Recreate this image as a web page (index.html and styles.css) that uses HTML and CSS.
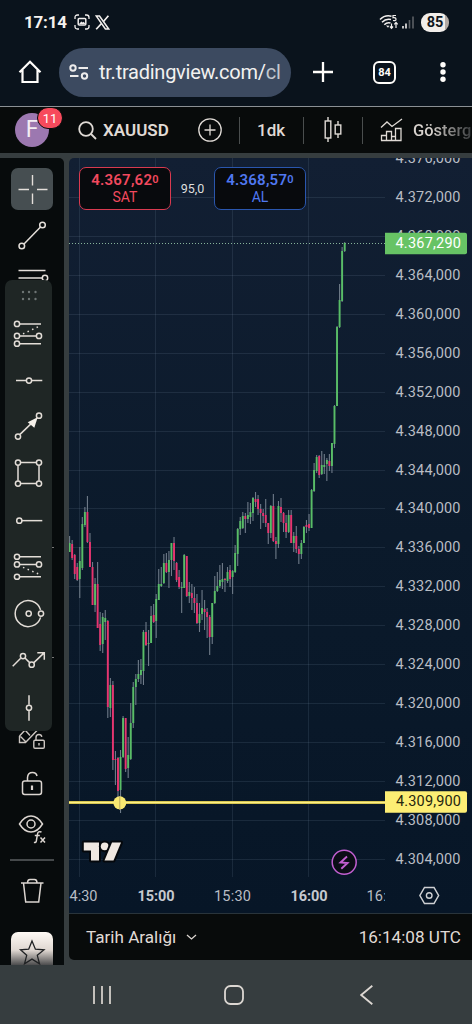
FILE: index.html
```html
<!DOCTYPE html>
<html lang="tr">
<head>
<meta charset="utf-8">
<title>XAUUSD</title>
<link rel="stylesheet" href="styles.css">
</head>
<body>
<div class="screen">
  <header class="status">
    <span class="clock">17:14</span>
    <svg class="st-shot" width="16" height="16" viewBox="0 0 16 16" fill="none" stroke="#f2efed" stroke-width="1.3"><path d="M1 5V3.500Q1 1 3.500 1H5M11 1h1.500Q15 1 15 3.500V5M15 11v1.500Q15 15 12.500 15H11M5 15H3.500Q1 15 1 12.500V11"/><rect x="4.200" y="4.500" width="7.600" height="6.500" rx="1" stroke-width="1.500"/><path d="M5 10l2.300-2.600 1.500 1.200 1-.8 1.600 2.200z" fill="#f2efed" stroke="none"/></svg>
    <svg class="st-x" width="15" height="15" viewBox="0 0 15 15" fill="none" stroke="#f2efed"><path d="M1.200 1h3.300l9.200 13h-3.300z" stroke-width="1.500"/><path d="M13.400 .8L8.300 6.700M6.500 8.500L1.200 14.300" stroke-width="1.700"/></svg>
    <span class="grow"></span>
    <svg class="st-wifi" width="20" height="16" viewBox="0 0 20 16" fill="none" stroke="#f2efed" stroke-width="1.600"><path d="M1 5.500Q6 .5 12.500 2.200M3 8.200Q7 4.300 12 5.600M5.300 10.700Q8 8 11.500 9"/><path d="M7 11.500l2 2.300 1.400-2z" fill="#f2efed" stroke="none"/><path d="M17 1.500h-3v2.200q3-.4 3 1.500t-3 1.300M12.500 9.500v4.500M11 12.500l1.500 1.800 1.500-1.800M17 14V8.500M15.300 10.300L17 8.400l1.700 1.900" stroke-width="1.200"/></svg>
    <svg class="st-sig" width="13" height="13" viewBox="0 0 13 13"><path d="M1 10v2.500M4 7.500v5" stroke="#f2efed" stroke-width="1.600"/><path d="M7.500 4v8.500M11 .5v12" stroke="#5c6065" stroke-width="1.600"/></svg>
    <span class="battery">85</span>
  </header>

  <div class="browser">
    <svg class="home" width="24" height="24" viewBox="0 0 24 24" fill="none" stroke="#fffdfa" stroke-width="2.200"><path d="M1.500 12.300L12 1.800l10.500 10.500M4.500 10v12h15V10"/></svg>
    <div class="url">
      <svg width="20" height="16" viewBox="0 0 20 16" fill="none" stroke="#ecebeb" stroke-width="2"><circle cx="4" cy="4" r="2.700"/><path d="M9.500 4H19M1 12h8.500"/><circle cx="15.500" cy="12" r="2.700"/></svg>
      <span class="address">tr.tradingview.com/<i>cl</i></span>
    </div>
    <svg class="plus" width="20" height="20" viewBox="0 0 20 20" stroke="#fffdfa" stroke-width="2.300"><path d="M10 0v20M0 10h20"/></svg>
    <span class="tabs">84</span>
    <svg class="dots" width="6" height="20" viewBox="0 0 6 20" fill="#fffdfa"><circle cx="3" cy="2.700" r="2.700"/><circle cx="3" cy="10" r="2.700"/><circle cx="3" cy="17.300" r="2.700"/></svg>
  </div>

  <div class="topbar">
    <div class="avatar">F<span class="badge">11</span></div>
    <svg class="search" width="19" height="19" viewBox="0 0 19 19" fill="none" stroke="#dfdad5" stroke-width="1.800"><circle cx="8" cy="8" r="6.800"/><path d="M13 13l5 5"/></svg>
    <span class="symbol">XAUUSD</span>
    <svg class="add" width="24" height="24" viewBox="0 0 24 24" fill="none" stroke="#dfdad5" stroke-width="1.300"><circle cx="12" cy="12" r="11.200"/><path d="M12 6.500v11M6.500 12h11"/></svg>
    <i class="sep"></i>
    <span class="interval">1dk</span>
    <i class="sep"></i>
    <svg class="bars" width="18" height="26" viewBox="0 0 18 26" fill="none" stroke="#dfdad5" stroke-width="1.400"><path d="M4 0v4M4 21v4M14 4v4M14 17v4"/><rect x="1.200" y="4" width="5.600" height="17"/><rect x="11.200" y="8" width="5.600" height="9"/></svg>
    <i class="sep"></i>
    <svg class="indic" width="23" height="24" viewBox="0 0 23 24" fill="none" stroke="#dfdad5" stroke-width="1.300"><path d="M1 9.500l6-5.500 5 4.500L22 1M1.500 22.500v-5h5v5M6.500 18v-4.500h5v9M11.500 18.500h4M15.500 22.500V10.500h5.500v12zM1 22.500h20"/></svg>
    <span class="indicators">Gösterg</span>
  </div>

  <main class="workspace">
    <aside class="sidebar">
      <div class="tool active"><svg width="42" height="42" viewBox="0 0 42 42" stroke="#e4dfda" stroke-width="1.400"><path d="M21.500 7v10.500M21.500 25.500V36M7.500 21.500H18M26 21.500h10.500"/></svg></div>
      <div class="tool line"><svg width="42" height="52" viewBox="0 0 42 52" fill="none" stroke="#e4dfda" stroke-width="1.500"><path d="M13 34l16.500-17"/><circle cx="10.800" cy="36" r="2.800"/><circle cx="31.500" cy="15" r="2.800"/></svg></div>
      <div class="tool levels"><svg width="42" height="46" viewBox="0 0 42 46" fill="none" stroke="#e4dfda" stroke-width="1.500"><path d="M7.500 8.500h27M7.500 16h24M7.500 24h27"/><circle cx="34" cy="16" r="2.700"/></svg></div>
      <span class="grow"></span>
      <div class="tool"><svg width="42" height="46" viewBox="0 0 42 46" fill="none" stroke="#ccc6c1" stroke-width="1.400"><path d="M8.500 19v6.500h6L26 13.500M8.500 19l7-7.500M9.500 19.500l5 5M14.500 13.500l4.500 5"/><rect x="22.800" y="23.300" width="10.500" height="8" rx="1.200"/><path d="M25 23v-2.500q0-3 3-3 2.500 0 2.800 2.300M28 26v2.500"/></svg></div>
      <div class="tool"><svg width="42" height="43" viewBox="0 0 42 43" fill="none" stroke="#dcd6d1" stroke-width="1.500"><rect x="11.500" y="18" width="19" height="13.500" rx="2.200"/><path d="M16.500 18v-3.500q.3-5 5-5 3.800 0 4.500 3.500"/><path d="M21 22.500v4.500" stroke-width="2.200"/></svg></div>
      <div class="tool"><svg width="42" height="46" viewBox="0 0 42 46" fill="none" stroke="#dcd6d1" stroke-width="1.500"><path d="M8.500 18Q13.500 10 20 10t11.500 8Q26.500 26 20 26T8.500 18z"/><circle cx="20" cy="18" r="4"/><path d="M30.500 26q-3.500-1.200-4 2l-1.200 7q-.4 2-2.300 1.200M23.800 29.500h5M29.500 31.500l4.500 5M34 31.500l-4.500 5"/></svg></div>
      <hr class="rule">
      <div class="tool"><svg width="42" height="46" viewBox="0 0 42 46" fill="none" stroke="#dcd6d1" stroke-width="1.500"><path d="M10 15h22.500M12.500 15l2.200 19h13l2.300-19M16.500 15q0-3.500 2.500-3.500h4.500q2.500 0 2.500 3.500"/></svg></div>
      <div class="tool star"><svg width="42" height="33" viewBox="0 0 42 33" fill="none" stroke="#202224" stroke-width="1.300"><path d="M21 9l3.400 8.200 8.600.6-6.700 5.500 2.200 8.500-7.500-4.700-7.500 4.700 2.200-8.500L9.500 17.800l8.200-.6z"/></svg></div>

      <div class="favorites">
        <svg class="grip" width="16" height="11" viewBox="0 0 16 11" fill="#6e7574"><circle cx="2" cy="2" r="1.200"/><circle cx="8" cy="2" r="1.200"/><circle cx="14.500" cy="2" r="1.200"/><circle cx="2" cy="9" r="1.200"/><circle cx="8" cy="9" r="1.200"/><circle cx="14.500" cy="9" r="1.200"/></svg>
        <svg class="fav" viewBox="0 0 47 46"><path d="M14.800 13.600H36M14.800 25.600H31M14.800 33.300H36"/><path class="dotted" d="M18 23.500L34 16"/><circle cx="12" cy="13.600" r="2.600"/><circle cx="12" cy="25.600" r="2.600"/><circle cx="34" cy="25.600" r="2.600"/><circle cx="12" cy="33.300" r="2.600"/></svg>
        <svg class="fav" viewBox="0 0 47 46"><path d="M11 23.200h10.200M26.800 23.200h10.500"/><circle cx="24" cy="23.200" r="2.600"/></svg>
        <svg class="fav" viewBox="0 0 47 46"><path d="M15 31l13-12.500"/><path class="solid" d="M32.700 13.900l-10 5 6.600 5.600z"/><circle cx="13" cy="33.200" r="2.600"/><circle cx="34" cy="12.300" r="2.600"/></svg>
        <svg class="fav" viewBox="0 0 47 46"><path d="M15.700 12.200h15.600M15.700 33.200h15.600M13 15v15.500M34 15v15.500"/><circle cx="13" cy="12.200" r="2.600"/><circle cx="34" cy="12.200" r="2.600"/><circle cx="13" cy="33.200" r="2.600"/><circle cx="34" cy="33.200" r="2.600"/></svg>
        <svg class="fav" viewBox="0 0 47 46"><path d="M17 23.300h20.300"/><circle cx="14.300" cy="23.300" r="2.600"/></svg>
        <svg class="fav" viewBox="0 0 47 46"><path d="M14.800 13.400H36M14.800 21.100H31M14.800 33.400H36"/><path class="dotted" d="M18 24L34.500 31"/><circle cx="12" cy="13.400" r="2.600"/><circle cx="12" cy="21.100" r="2.600"/><circle cx="34" cy="21.100" r="2.600"/><circle cx="12" cy="33.400" r="2.600"/></svg>
        <svg class="fav" viewBox="0 0 47 46"><path d="M35.600 19.500A13 13 0 1 0 35.600 27"/><circle cx="23.700" cy="23.200" r="2.600"/><circle cx="36" cy="23.200" r="2.600"/></svg>
        <svg class="fav" viewBox="0 0 47 46"><path d="M7.700 29l8-8M20 20.700l4.600 4.600M28.600 25.500l10.500-10M32.300 15.400h7v7"/><circle cx="18" cy="18.700" r="2.600"/><circle cx="26.700" cy="27.300" r="2.600"/></svg>
        <svg class="fav" viewBox="0 0 47 46"><path d="M24 11v9.500M24 26v10.500"/><circle cx="24" cy="23.400" r="2.600"/></svg>
      </div>
    </aside>

    <section class="panel">
      <div class="chart">
        <svg class="plot" width="403" height="755" viewBox="69 158 403 755">
          <defs><clipPath id="axis"><rect x="69" y="880" width="316" height="30"/></clipPath></defs>
          <path class="grid" d="M79.500 158V877M155.500 158V877M232.500 158V877M308.500 158V877M69 197.500H385M69 236.500H385M69 275.500H385M69 314.500H385M69 353.500H385M69 392.500H385M69 431.500H385M69 470.500H385M69 508.500H385M69 547.500H385M69 586.500H385M69 625.500H385M69 664.500H385M69 703.500H385M69 742.500H385M69 781.500H385M69 820.500H385M69 859.500H385"/>
          <path class="last" d="M69 243.500H385"/>
          <path class="support-edge" d="M69 802.500H385"/>
          <path class="support" d="M69 802.500H385"/>
          <g id="candles"></g>
          <circle cx="119.800" cy="802.800" r="6.500" fill="#f9e972"/>
          <path d="M119.800 796v14" stroke="#b9a860" stroke-width="1"/>
          <g id="prices" class="prices"></g>
          <path d="M385 232.800h80a2 2 0 0 1 2 2v17.500a2 2 0 0 1-2 2h-80z" fill="#67c365"/>
          <text class="tag tag-last" x="395.500" y="247.700" textLength="65.500">4.367,290</text>
          <path d="M385 791.300h80a2 2 0 0 1 2 2v17.500a2 2 0 0 1-2 2h-80z" fill="#fdee74"/>
          <text class="tag tag-line" x="396" y="806" textLength="65">4.309,900</text>
          <g class="logo"><path d="M83.800 842.500H99v18h-8v-10h-7.200z"/><circle cx="104.700" cy="846.300" r="3.900"/><path d="M112 842.500h9l-7.500 18h-9z"/></g>
          <circle cx="344.200" cy="862.300" r="12" fill="#0b0d16" stroke="#c25fd0" stroke-width="1.500"/>
          <path d="M347 856.500l-6.500 6 7 .5-6.200 5.800" fill="none" stroke="#c25fd0" stroke-width="1.900"/>
          <g class="times" clip-path="url(#axis)">
            <text x="69.500" y="901" textLength="28">4:30</text>
            <text class="hour" x="137.500" y="901" textLength="37">15:00</text>
            <text x="214" y="901" textLength="37">15:30</text>
            <text class="hour" x="290.500" y="901" textLength="37">16:00</text>
            <text x="366.500" y="901" textLength="37">16:30</text>
          </g>
          <path d="M424.500 887.500h9.500l4.600 8-4.600 8h-9.500l-4.600-8z" fill="none" stroke="#ced0d3" stroke-width="1.500"/>
          <circle cx="429.200" cy="895.500" r="2.800" fill="none" stroke="#ced0d3" stroke-width="1.400"/>
        </svg>
        <div class="quotes">
          <div class="quote sell"><b>4.367,62<sup>0</sup></b><span>SAT</span></div>
          <span class="spread">95,0</span>
          <div class="quote buy"><b>4.368,57<sup>0</sup></b><span>AL</span></div>
        </div>
      </div>
      <footer class="range">
        <span class="range-label">Tarih Aralığı</span>
        <svg width="11" height="7" viewBox="0 0 11 7" fill="none" stroke="#dcd6d1" stroke-width="1.300"><path d="M1 1l4.500 4L10 1"/></svg>
        <span class="grow"></span>
        <span class="utc">16:14:08 UTC</span>
      </footer>
    </section>
  </main>

  <nav class="navbar">
    <svg width="20" height="20" viewBox="0 0 20 20" stroke="#dcd7d2" stroke-width="1.700"><path d="M2 1v18M10 1v18M18 1v18"/></svg>
    <svg class="nav-home" width="20" height="20" viewBox="0 0 20 20" fill="none" stroke="#dcd7d2" stroke-width="1.800"><rect x="1" y="1" width="18" height="18" rx="5.500"/></svg>
    <svg width="13" height="20" viewBox="0 0 13 20" fill="none" stroke="#dcd7d2" stroke-width="1.800"><path d="M12.300 .7L1.200 10l11.100 9.300"/></svg>
  </nav>
</div>
<script src="chart.js"></script>
</body>
</html>
```

FILE: styles.css
```css
* { box-sizing: border-box; }
body { margin: 0; background: #363d3f; font-family: Roboto, "Liberation Sans", sans-serif; }
svg { display: block; flex: none; }
.screen { width: 472px; height: 1024px; display: flex; flex-direction: column; overflow: hidden; background: #363d3f; }
.grow { flex: 1; }

.status { height: 44px; display: flex; align-items: center; padding-left: 24px; padding-right: 23px; background: #0a131c; color: #f5f2ef; }
.clock { width: 43px; font-size: 17px; font-weight: 700; letter-spacing: -0.2px; white-space: nowrap; }
.st-shot { margin-left: 7px; }
.st-x { margin-left: 5px; }
.st-wifi { margin-right: 3px; }
.st-sig { margin-right: 6px; }
.battery { width: 28px; height: 19px; line-height: 19px; border-radius: 9px; text-align: center; font-size: 14.500px; font-weight: 700; color: #11161b; background: linear-gradient(90deg, #f2eeea 86%, #b3aaa4 86%); }

.browser { height: 62px; display: flex; align-items: center; padding: 0 26px 6px 18px; background: #0a131c; }
.url { width: 232px; height: 49px; margin-left: 17px; padding-left: 10px; display: flex; align-items: center; border-radius: 25px; background: #3c4a60; overflow: hidden; }
.address { margin-left: 10px; font-size: 20px; letter-spacing: -0.250px; color: #f2f1f0; white-space: nowrap; }
.address i { font-style: normal; color: #c3c8cf; }
.plus { margin-left: 22px; }
.tabs { width: 23px; height: 23px; margin-left: 40px; line-height: 19px; border: 2px solid #fffdfa; border-radius: 6px; text-align: center; font-size: 11px; font-weight: 700; color: #fffdfa; }
.dots { margin-left: auto; }

.topbar { height: 47px; flex: none; display: flex; align-items: center; padding-left: 15px; border-top: 1px solid #8b9094; background: #080b0b; color: #e0dbd6; overflow: hidden; }
.avatar { position: relative; width: 34px; height: 34px; line-height: 34px; border-radius: 50%; text-align: center; font-size: 23px; color: #f3edf3; background: #9c78b0; }
.badge { position: absolute; left: 22px; top: -6px; width: 26px; height: 22px; line-height: 21px; border: 1px solid #080b0b; border-radius: 11px; font-size: 13px; color: #fff; background: #f74a5c; }
.search { margin-left: 29px; }
.symbol { width: 67px; margin-left: 6px; margin-right: 1px; font-size: 17px; font-weight: 600; letter-spacing: 0; white-space: nowrap; }
.add { margin-left: 27px; }
.sep { width: 1px; height: 27px; background: #4a4e4e; }
.add + .sep { margin-left: 17px; }
.interval { width: 29px; margin-left: 17px; margin-right: 17px; font-size: 17px; font-weight: 500; white-space: nowrap; }
.bars { margin-left: 20px; margin-right: 20px; }
.indic { margin-left: 17px; }
.indicators { margin-left: 10px; font-size: 16.500px; font-weight: 500; white-space: nowrap; background: linear-gradient(90deg, #d8d3ce 30%, #3b3e40 100%); background-clip: text; -webkit-background-clip: text; color: transparent; }

.workspace { flex: none; height: 807px; margin-top: 5px; display: flex; gap: 5px; }
.sidebar { position: relative; width: 64px; height: 807px; padding-top: 10px; display: flex; flex-direction: column; align-items: center; border-radius: 0 5px 0 0; background: #070b0c; }
.tool { width: 42px; flex: none; overflow: hidden; }
.active { border-radius: 7px; background: #464e51; }
.rule { width: 44px; height: 2px; margin: 7px 0 7px; border: 0; background: #45494b; }
.star { height: 33px; margin-top: 18px; border-radius: 7px 7px 0 0; background: linear-gradient(#fffaf5, #dfd7d1 55%, #4c4c4d); }
.favorites { position: absolute; left: 5px; top: 122px; width: 47px; height: 451px; padding-top: 10px; display: flex; flex-direction: column; align-items: center; border-radius: 7px; background: #1f2625; }
.favorites::before, .favorites::after { content: ""; position: absolute; left: 47px; top: 267px; width: 2px; height: 1px; background: #777; }
.favorites::after { top: 377px; }
.grip { margin-bottom: 9px; }
.fav { width: 47px; height: 46.700px; fill: none; stroke: #e3ddd7; stroke-width: 1.500; }
.fav .dotted { stroke-dasharray: 1.500 3.500; }
.fav .solid { fill: #f5f0ea; stroke: none; }

.panel { width: 403px; }
.chart { position: relative; height: 755px; border-radius: 5px 0 0 0; overflow: hidden; background: linear-gradient(#121f33, #0b1a2b 50%, #071627); }
.quotes { position: absolute; left: 10px; top: 9px; display: flex; align-items: center; }
.quote { width: 92px; height: 43px; padding-top: 4px; display: flex; flex-direction: column; align-items: center; border: 1px solid; border-radius: 7px; line-height: 17px; background: #080a0d; }
.quote b { font-size: 15px; font-weight: 600; letter-spacing: 0.200px; }
.quote sup { font-size: 11px; line-height: 0; vertical-align: 2px; }
.quote span { font-size: 14px; }
.sell { border-color: #d93a50; color: #f2495e; }
.buy { border-color: #2a56ad; color: #5078f0; }
.spread { width: 43px; text-align: center; font-size: 12.500px; color: #dedede; }

.grid { stroke: #9fb6d0; stroke-opacity: 0.120; fill: none; }
.last { stroke: #86b39a; stroke-dasharray: 1 2; }
.support { stroke: #fdef86; stroke-width: 1.600; }
.support-edge { stroke: #c8b93f; stroke-width: 3; }
.wick { stroke: #6f7b89; stroke-width: 1.100; }
.up { fill: #58bd66; }
.down { fill: #e8336f; }
.prices text, .tag, .times text { font-size: 14.500px; fill: #b9bdc4; }
.prices text.tag-last, .tag-last { fill: #fff; }
.tag-line { fill: #25260f; }
text.tag-last { fill: #fff; }
text.tag-line { fill: #25260f; }
.times .hour { font-weight: 700; fill: #c5c9cf; }
.logo { fill: #f0e8e1; stroke: #05080c; stroke-width: 4; paint-order: stroke; stroke-linejoin: round; }

.range { height: 47px; padding-left: 17px; padding-right: 11px; display: flex; align-items: center; border-top: 1px solid #29343b; border-radius: 0 0 0 5px; background: #080b0b; color: #e0dbd6; font-size: 17.100px; white-space: nowrap; }
.range svg { margin-left: 10px; }

.navbar { flex: none; height: 59px; display: flex; align-items: center; padding-left: 92px; padding-right: 99px; justify-content: space-between; }
.nav-home { margin-right: 4px; }
```

FILE: chart.js
```javascript
// One row per minute: high, low, body top, body bottom, direction (1 up, 0 down)
const rows = [
  [536,552,543,552,1],[540,560,544,558,0],[554,579,555,574,0],[563,581,567,580,0],[547,598,561,579,1],
  [517,570,524,568,1],[507,527,512,525,1],[496,543,512,542,0],[533,567,542,567,0],[562,605,567,605,0],
  [578,612,584,605,1],[562,628,584,628,0],[612,651,624,645,0],[613,653,617,644,1],[610,640,618,622,1],
  [620,718,621,707,0],[678,717,685,708,1],[681,770,685,760,0],[751,785,759,760,0],[757,803,758,791,0],
  [750,813,757,790,1],[716,758,718,757,1],[718,772,718,769,0],[737,778,755,768,1],[703,760,723,759,1],
  [682,728,687,723,1],[674,705,679,687,1],[660,682,674,679,1],[659,684,670,675,1],[630,685,632,671,1],
  [622,646,632,645,0],[630,666,643,644,1],[606,643,616,643,1],[604,623,615,622,0],[594,638,599,621,1],
  [569,600,584,600,1],[567,587,584,586,1],[554,584,563,583,1],[553,573,563,572,0],[551,588,560,572,1],
  [543,576,543,560,1],[537,570,543,561,0],[562,582,563,580,0],[570,589,577,587,0],[582,613,587,588,1],
  [554,588,555,588,1],[556,597,556,596,0],[582,603,592,596,1],[584,610,593,598,0],[587,613,598,603,0],
  [594,624,603,623,0],[603,632,614,623,1],[590,620,608,614,1],[600,630,609,612,0],[608,638,612,617,0],
  [615,655,617,637,0],[603,644,603,637,1],[576,604,591,603,1],[572,592,586,591,1],[565,588,580,586,1],
  [563,589,579,582,1],[578,592,579,580,0],[567,583,572,581,1],[565,587,570,579,0],[570,594,571,577,1],
  [545,573,553,572,1],[528,566,529,554,1],[517,535,521,529,1],[512,529,516,528,1],[513,533,516,519,0],
  [502,523,515,519,1],[503,524,512,517,1],[497,521,498,513,1],[492,507,499,502,0],[495,515,499,509,0],
  [504,529,509,513,0],[509,523,513,516,0],[499,527,515,523,0],[523,544,523,533,0],[505,538,506,533,1],
  [494,542,506,541,0],[537,559,541,544,0],[501,548,506,544,1],[498,522,507,513,0],[512,532,513,523,0],
  [515,538,523,532,0],[510,533,515,532,1],[510,543,515,543,0],[532,552,536,543,1],[526,553,536,549,0],
  [546,564,549,554,0],[540,559,543,554,1],[526,543,527,543,1],[520,533,525,527,0],[514,531,524,528,0],
  [489,528,490,528,1],[463,492,470,491,1],[455,473,457,471,1],[455,478,456,475,0],[451,475,465,474,1],
  [454,474,465,467,1],[458,481,460,464,1],[454,471,461,466,0],[443,473,443,466,1],[405,448,406,444,1],
  [326,406,327,406,1],[284,328,300,327,1],[247,302,251,301,1],[242,252,243,251,1]
];
const ns = "http://www.w3.org/2000/svg";
function add(parent, name, attrs) {
  const el = document.createElementNS(ns, name);
  for (const key in attrs) el.setAttribute(key, attrs[key]);
  parent.appendChild(el);
  return el;
}
const candles = document.getElementById("candles");
rows.forEach(([high, low, top, bottom, up], i) => {
  const x = 69.600 + i * 2.547;
  add(candles, "line", { class: "wick", x1: x, x2: x, y1: high, y2: low });
  add(candles, "rect", { class: up ? "up" : "down", x: x - 0.950, y: top, width: 1.900, height: Math.max(1, bottom - top) });
});
const prices = document.getElementById("prices");
for (let i = 0; i < 19; i++) {
  const label = add(prices, "text", { x: 395.500, y: 163.300 + i * 38.900, textLength: 65 });
  label.textContent = "4." + (376 - i * 4) + ",000";
}
```
